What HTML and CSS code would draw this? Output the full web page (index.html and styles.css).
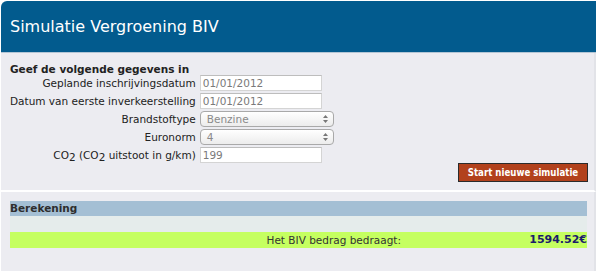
FILE: index.html
```html
<!DOCTYPE html>
<html lang="nl">
<head>
<meta charset="utf-8">
<title>Simulatie Vergroening BIV</title>
<link rel="stylesheet" href="styles.css">
</head>
<body>
<div class="page">
  <header class="title-bar">Simulatie Vergroening BIV</header>

  <section class="panel form-panel">
    <h2 class="form-heading">Geef de volgende gegevens in</h2>
    <div class="form-grid">
      <label class="form-label" for="f1">Geplande inschrijvingsdatum</label>
      <input class="text-input" id="f1" type="text" value="01/01/2012">

      <label class="form-label" for="f2">Datum van eerste inverkeerstelling</label>
      <input class="text-input" id="f2" type="text" value="01/01/2012">

      <label class="form-label" for="f3">Brandstoftype</label>
      <div class="select-box">
        <span class="select-value">Benzine</span>
        <svg class="select-arrows" width="7" height="10" viewBox="0 0 7 10"><path d="M1 4 L3.5 1 L6 4 Z M1 6 L3.5 9 L6 6 Z" fill="#777"/></svg>
      </div>

      <label class="form-label" for="f4">Euronorm</label>
      <div class="select-box">
        <span class="select-value">4</span>
        <svg class="select-arrows" width="7" height="10" viewBox="0 0 7 10"><path d="M1 4 L3.5 1 L6 4 Z M1 6 L3.5 9 L6 6 Z" fill="#777"/></svg>
      </div>

      <label class="form-label" for="f5">CO<sub>2</sub> (CO<sub>2</sub> uitstoot in g/km)</label>
      <input class="text-input" id="f5" type="text" value="199">
    </div>
    <div class="actions">
      <button class="start-button" type="button">Start nieuwe simulatie</button>
    </div>
  </section>

  <section class="panel result-panel">
    <div class="section-bar">Berekening</div>
    <div class="spacer-row"></div>
    <div class="result-row">
      <span class="result-label">Het BIV bedrag bedraagt:</span>
      <span class="result-value">1594.52€</span>
    </div>
  </section>
</div>
</body>
</html>
```
FILE: styles.css
```css
html, body {
  margin: 0;
  padding: 0;
  background: #ffffff;
}

body {
  font-family: "DejaVu Sans", Verdana, sans-serif;
  font-size: 10.5px;
  color: #222222;
}

.page {
  width: 595px;
  padding: 1px 0 0 1px;
}

.title-bar {
  box-sizing: border-box;
  height: 52px;
  padding: 16px 0 0 9px;
  line-height: 19px;
  font-size: 16px;
  color: #ffffff;
  background: #025b8e;
  border-top-left-radius: 6px;
  border-bottom: 1px solid #b4c6d5;
}

.panel {
  box-sizing: border-box;
  width: 595px;
  background: #ececf1;
  border-right: 2px solid #e2e3e8;
  padding: 0 7px 0 9px;
}

.form-panel {
  padding-top: 10px;
  padding-bottom: 8px;
  border-bottom: 2px solid #ffffff;
}

.form-heading {
  margin: 0;
  font-size: 10.5px;
  line-height: 12px;
  font-weight: bold;
  color: #222222;
}

.form-grid {
  display: grid;
  grid-template-columns: max-content max-content;
  column-gap: 4px;
  row-gap: 2px;
  align-items: center;
}

.form-label {
  text-align: right;
  line-height: 16px;
  color: #222222;
}

.form-label sub {
  font-size: 10.5px;
  vertical-align: -2px;
  line-height: 0;
}

.text-input {
  box-sizing: border-box;
  width: 122px;
  height: 16px;
  margin: 0;
  padding: 0 0 0 2px;
  border: 1px solid #d4d4d4;
  border-top-color: #bdbdbd;
  background: #ffffff;
  font-family: "DejaVu Sans", Verdana, sans-serif;
  font-size: 10.5px;
  color: #7a7a7a;
  outline: none;
}

.select-box {
  position: relative;
  box-sizing: border-box;
  width: 134px;
  height: 16px;
  border: 1px solid #a9a9a9;
  border-radius: 4px;
  background: linear-gradient(#ffffff, #ececec);
  display: flex;
  align-items: center;
  padding-left: 6px;
  color: #8a8a8a;
}

.select-value {
  line-height: 14px;
}

.select-arrows {
  position: absolute;
  right: 4px;
  top: 2px;
}

.actions {
  display: flex;
  justify-content: flex-end;
  padding-right: 0;
}

.start-button {
  box-sizing: border-box;
  width: 130px;
  height: 19px;
  margin: 0 -1px 0 0;
  padding: 0;
  border: 1px solid #2b2b2b;
  background: #b2411c;
  color: #ffffff;
  font-family: "DejaVu Sans Condensed", "DejaVu Sans", sans-serif;
  font-stretch: condensed;
  font-weight: bold;
  font-size: 9.6px;
  line-height: 17px;
  cursor: pointer;
}

.result-panel {
  padding-top: 9px;
  height: 80px;
}

.section-bar {
  height: 15px;
  line-height: 15px;
  background: #a4bfd4;
  font-weight: bold;
  color: #2e2e2e;
}

.spacer-row {
  height: 16px;
  background: #e5eceb;
}

.result-row {
  display: grid;
  grid-template-columns: 391px 1fr;
  height: 16px;
  line-height: 16px;
  background: #c5ff60;
}

.result-label {
  text-align: right;
  color: #333333;
}

.result-value {
  text-align: right;
  font-weight: bold;
  font-size: 11px;
  color: #1b1b6b;
}
```
